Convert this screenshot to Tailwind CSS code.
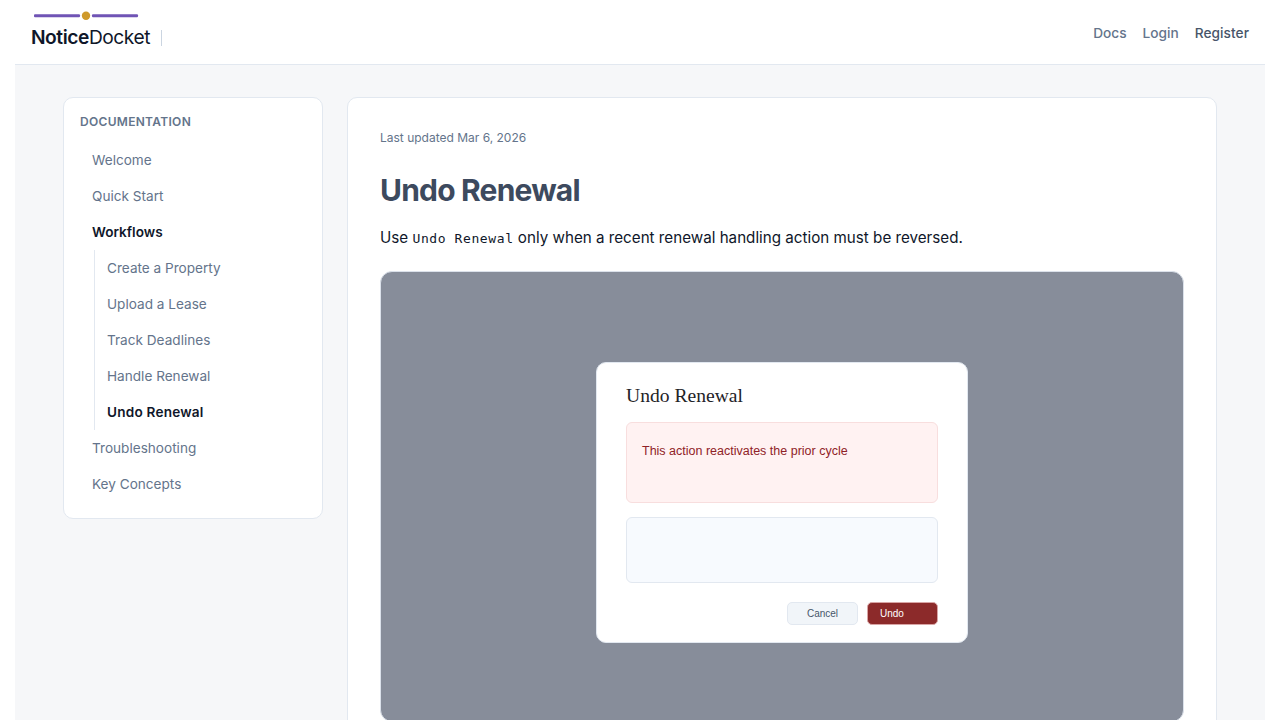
<!doctype html>
<html lang="en"><head><meta charset="utf-8"><title>Undo Renewal</title>
<script src="https://cdn.jsdelivr.net/npm/@tailwindcss/browser@4"></script></head>
<body class="bg-white font-['Inter',sans-serif] overflow-hidden">
<div class="h-[720px] mx-[15px] overflow-hidden flex flex-col">
<header class="h-[65px] shrink-0 bg-white border-b border-[#e2e8f0] flex items-start justify-between pr-4 pl-4">
  <div class="flex items-start pt-[10px]">
    <div class="flex flex-col">
      <svg class="w-[106px] h-[11px] ml-[3px] mb-[3px]" viewBox="0 0 106 11"><rect x="0" y="4.3" width="46" height="3" rx="1" fill="#7054b5"/><circle cx="52" cy="5.8" r="4.2" fill="#cf9a2b"/><rect x="58" y="4.3" width="46" height="3" rx="1" fill="#7054b5"/></svg>
      <div class="text-[19.2px] leading-[26px] tracking-[-0.45px] text-[#0f172a]"><span class="font-semibold">Notice</span><span>Docket</span></div>
    </div>
    <div class="w-px h-[16px] bg-[#cbd5e1] ml-[11px] mt-[20px]"></div>
  </div>
  <nav class="flex gap-4 text-[13.7px] font-medium text-[#64748b] pt-[23px]"><a>Docs</a><a>Login</a><a class="text-[#475569] tracking-[0.05px]">Register</a></nav>
</header>
<div class="flex-1 bg-[#f6f7f9] flex items-start gap-6 pl-12 pr-12 pt-8">
  <aside class="w-[260px] h-[422px] shrink-0 bg-white border border-[#e2e8f0] rounded-[10px] pt-4 px-4">
    <div class="text-[12px] leading-4 font-semibold tracking-[0.3px] text-[#64748b]">DOCUMENTATION</div>
    <ul class="mt-[12px] text-[13.6px] text-[#64748b]">
      <li class="h-9 flex items-center pl-3">Welcome</li>
      <li class="h-9 flex items-center pl-3">Quick Start</li>
      <li class="h-9 flex items-center pl-3 font-semibold text-[#0f172a]">Workflows</li>
      <li class="ml-[14px] border-l border-[#e2e8f0] pl-3">
        <ul>
          <li class="h-9 flex items-center">Create a Property</li>
          <li class="h-9 flex items-center">Upload a Lease</li>
          <li class="h-9 flex items-center">Track Deadlines</li>
          <li class="h-9 flex items-center">Handle Renewal</li>
          <li class="h-9 flex items-center font-semibold text-[#0f172a] tracking-[0.2px]">Undo Renewal</li>
        </ul>
      </li>
      <li class="h-9 flex items-center pl-3">Troubleshooting</li>
      <li class="h-9 flex items-center pl-3">Key Concepts</li>
    </ul>
  </aside>
  <main class="flex-1 h-[700px] bg-white border border-[#e2e8f0] rounded-[10px] pt-8 px-8">
    <p class="text-[12px] leading-4 text-[#64748b]">Last updated Mar 6, 2026</p>
    <h1 class="mt-[26px] text-[30px] leading-[36px] font-bold tracking-[-0.8px] text-[#3d4a5e]">Undo Renewal</h1>
    <p class="mt-[18px] text-[15.2px] leading-6 text-[#0f172a]">Use <code class="font-['DejaVu_Sans_Mono',monospace] text-[13px] tracking-[0.6px]">Undo Renewal</code> only when a recent renewal handling action must be reversed.</p>
    <div class="mt-[20px] h-[451px] bg-[#878d9a] border border-[#dbe1ea] rounded-[12px] flex justify-center pt-[90px]">
      <div class="w-[372px] h-[281px] bg-white border border-[#e2e8f0] rounded-[10px] px-[29px] pt-[21px]">
        <div class="font-['Liberation_Serif',serif] text-[19.6px] leading-6 text-[#1f2328]">Undo Renewal</div>
        <div class="mt-[14px] h-[81px] bg-[#fff2f2] border border-[#f8dede] rounded-[6px] px-[15px] pt-[20px] font-['Liberation_Sans',sans-serif] text-[12.5px] leading-4 text-[#8f2227]">This action reactivates the prior cycle</div>
        <div class="mt-[14px] h-[66px] bg-[#f7fafe] border border-[#e2e8f0] rounded-[6px]"></div>
        <div class="mt-[19px] flex justify-end gap-[9px] font-['Liberation_Sans',sans-serif] text-[10px]">
          <div class="w-[71px] h-[23px] bg-[#f1f5f9] border border-[#e2e8f0] rounded-[5px] flex items-center justify-center text-[#475569]">Cancel</div>
          <div class="w-[71px] h-[23px] bg-[#8c2a2a] border border-[#d8a5a5] rounded-[5px] flex items-center pl-[12px] text-white">Undo</div>
        </div>
      </div>
    </div>
  </main>
</div>
</div>
</body></html>
